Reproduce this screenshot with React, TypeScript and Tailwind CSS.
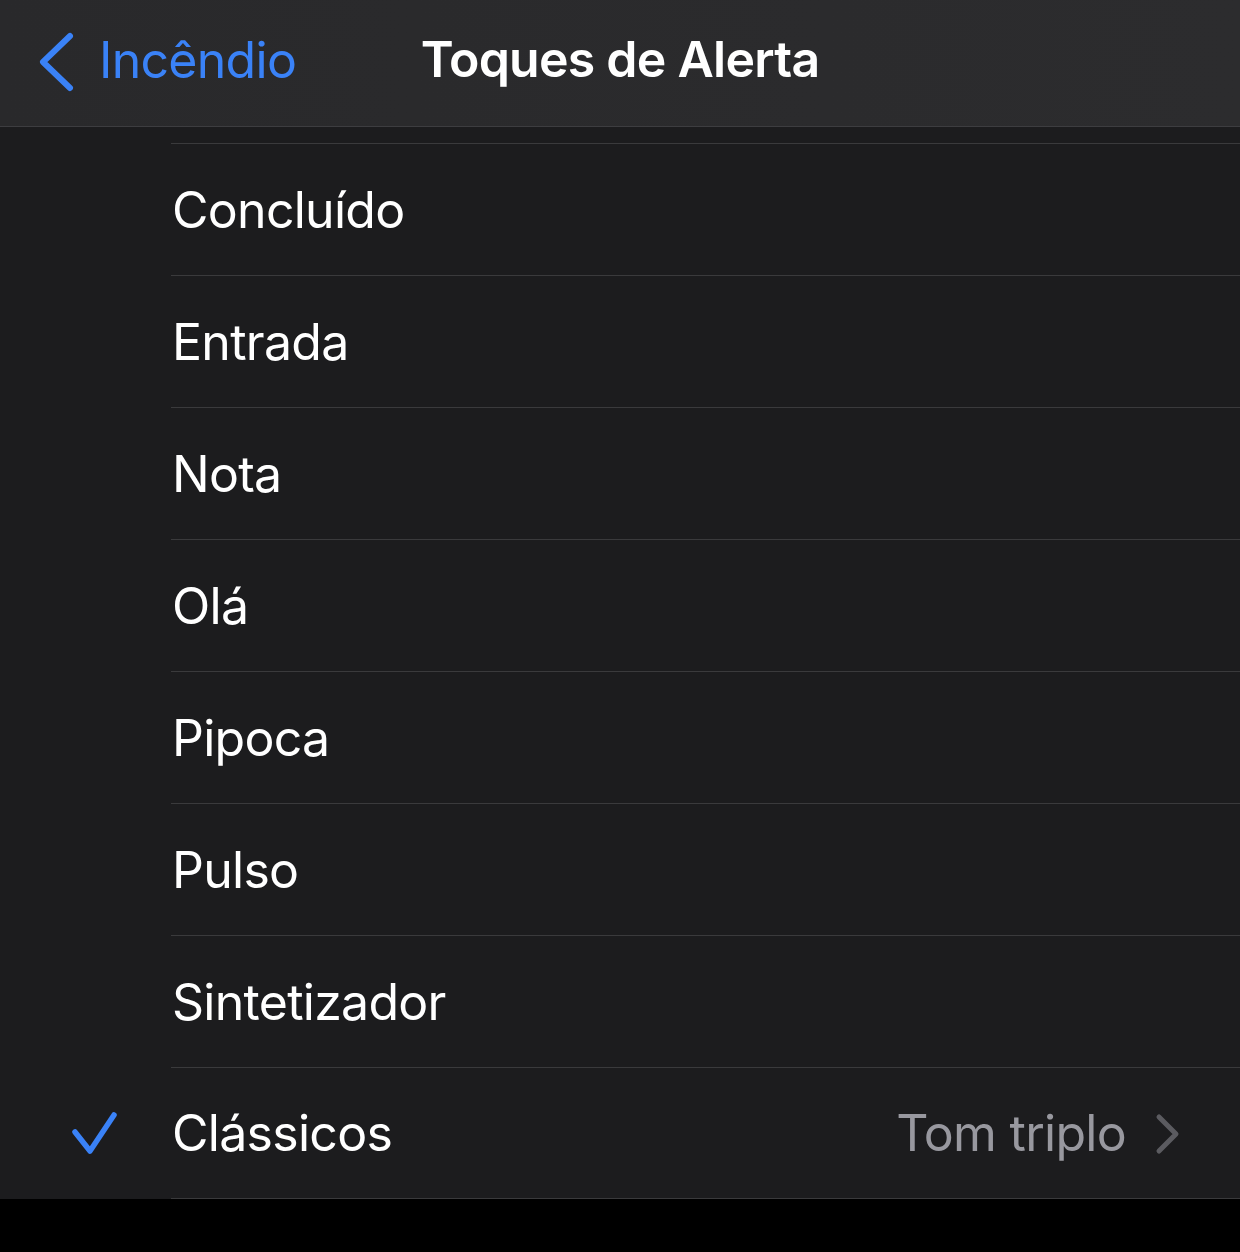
const tones = ['Concluído', 'Entrada', 'Nota', 'Olá', 'Pipoca', 'Pulso', 'Sintetizador'];

function ToneRow({ name }: { name: string }) {
  return (
    <div className="flex h-[132px] items-center border-t border-[#3a3a3c] pl-px">
      <span className="text-[50px] leading-none text-white">{name}</span>
    </div>
  );
}

export default function App() {
  return (
    <main className="flex min-h-[1252px] w-[1240px] flex-col bg-black font-['Inter',sans-serif] tracking-[-0.045em]">
      <header className="relative flex h-[127px] items-center border-b border-[#3d3d40] bg-gradient-to-r from-[#29292b] to-[#2c2c2e] pb-[6px]">
        <button className="flex items-center pl-[37px] text-[#3a82f7]">
          <svg width="40" height="62" viewBox="0 0 40 62" fill="none" stroke="currentColor" strokeWidth="6" strokeLinecap="round" strokeLinejoin="round" className="mt-[4px]">
            <path d="M33 5 L6 31 L33 57" />
          </svg>
          <span className="ml-[22px] text-[50px] leading-none">Incêndio</span>
        </button>
        <h1 className="pointer-events-none absolute inset-x-0 top-[34px] text-center text-[50px] font-semibold leading-none tracking-[-0.015em] text-white">
          Toques de Alerta
        </h1>
      </header>

      <section className="bg-[#1c1c1e] pt-[16px]">
        <div className="ml-[171px] border-b border-[#3a3a3c]">
          {tones.map((t) => (
            <ToneRow key={t} name={t} />
          ))}
          <div className="relative flex h-[131px] items-center border-t border-[#3a3a3c] pl-px pr-[58px]">
            <svg width="52" height="52" viewBox="0 0 52 52" fill="none" stroke="#3a82f7" strokeWidth="5.5" strokeLinecap="round" strokeLinejoin="round" className="absolute -left-[102px] top-[40px]">
              <path d="M6 24 L21 43 L45 7" />
            </svg>
            <span className="flex-1 text-[50px] leading-none text-white">Clássicos</span>
            <span className="text-[50px] leading-none text-[#98989f]">Tom triplo</span>
            <svg width="28" height="42" viewBox="0 0 28 42" fill="none" stroke="#5b5b60" strokeWidth="5" strokeLinecap="round" strokeLinejoin="round" className="ml-[28px] mt-[2px]">
              <path d="M5 4 L22 21 L5 38" />
            </svg>
          </div>
        </div>
      </section>
    </main>
  );
}
